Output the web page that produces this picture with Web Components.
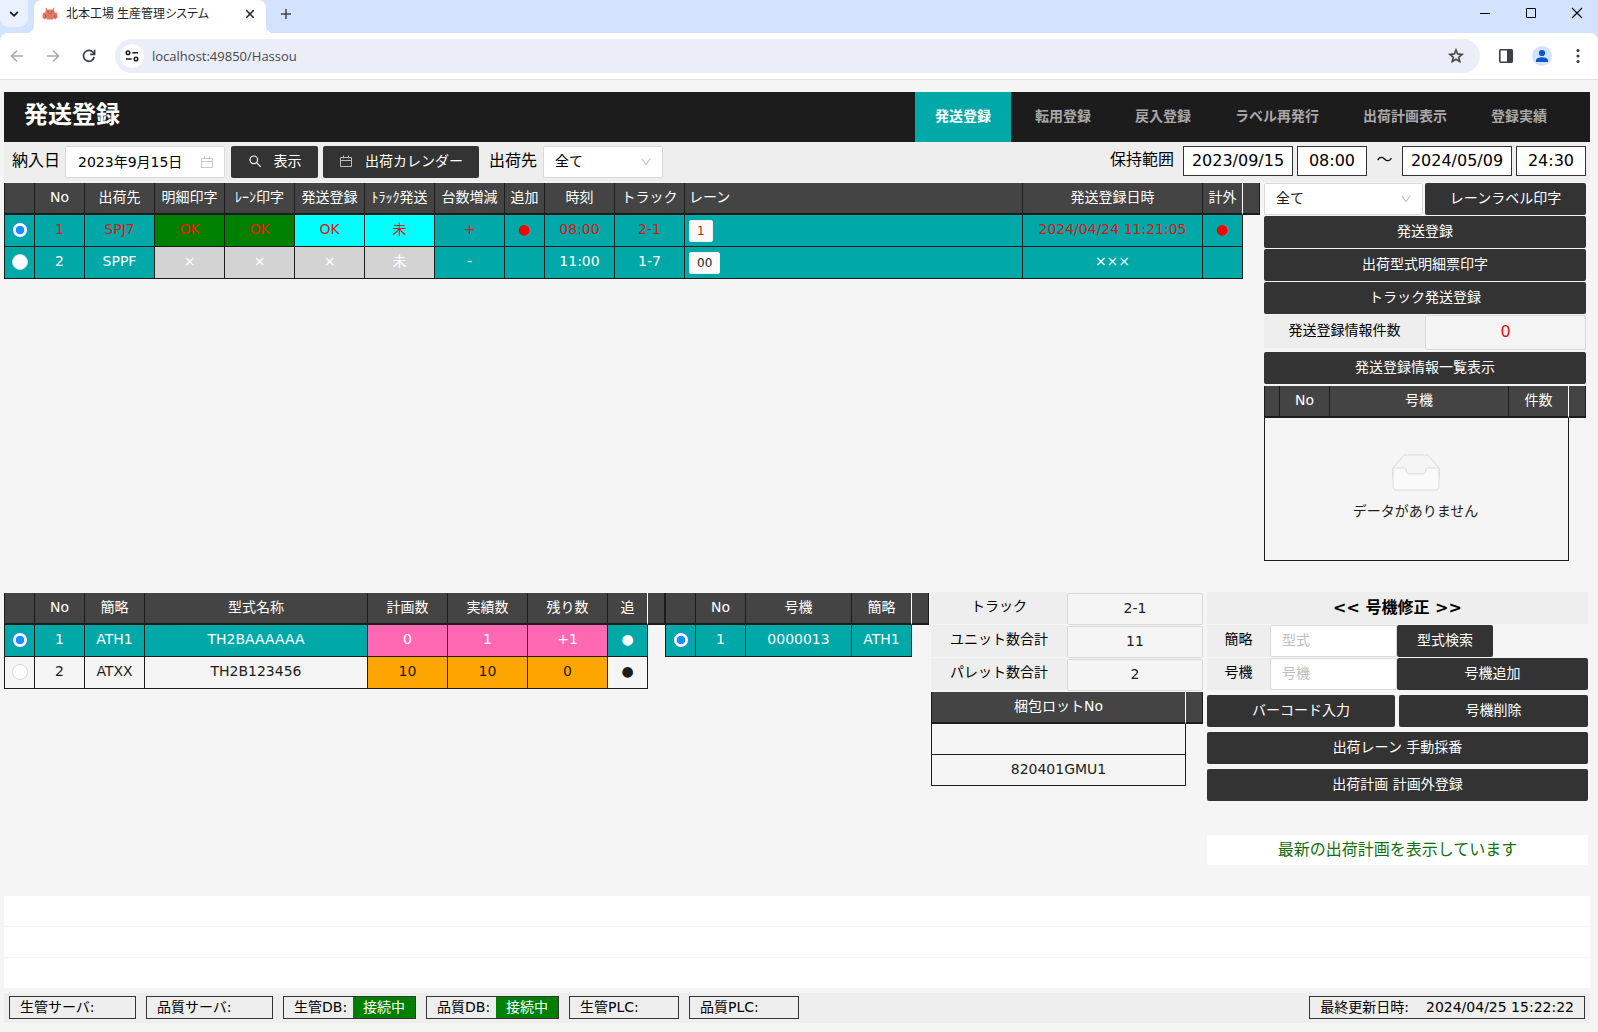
<!DOCTYPE html>
<html lang="ja">
<head>
<meta charset="utf-8">
<title>北本工場 生産管理システム</title>
<style>
  html, body { margin: 0; background: #f5f5f5; }
  body {
    font-family: "DejaVu Sans", "Noto Sans CJK JP", sans-serif;
    font-size: 14px; line-height: 20px; color: #1c1c1c;
    --dark: #333; --line: #1c1c1c; --teal: #00a8a8; --bar: #eee; --edge: #d9d9d9;
  }
</style>
</head>
<body>
<browser-frame></browser-frame>
<shipping-page></shipping-page>

<script>
const define = (name, html, setup) => {
  const template = document.createElement('template');
  template.innerHTML = '<style>*{box-sizing:border-box}:host{display:block}button,input,select{font:inherit;color:inherit;margin:0}</style>' + html;
  customElements.define(name, class extends HTMLElement {
    connectedCallback() {
      if (this.shadowRoot) return;
      const root = this.attachShadow({ mode: 'open' });
      root.append(template.content.cloneNode(true));
      if (setup) setup(this, root);
    }
  });
};

/* dark action button */
define('ui-button', `
<style>
  :host { display: flex; }
  button { flex: 1; height: 32px; border: 0; border-radius: 2px; background: var(--dark); color: #fff;
    display: flex; align-items: center; justify-content: center; gap: 12px; padding: 0 16px 2px; white-space: nowrap; line-height: 20px; }
  ::slotted(svg) { width: 14px; height: 14px; }
</style>
<button type="button"><slot name="icon"></slot><slot></slot></button>`);

/* drop-down */
define('ui-select', `
<style>
  :host { display: grid; }
  select, svg { grid-area: 1 / 1; }
  select { appearance: none; width: 100%; height: 32px; border: 1px solid var(--edge); border-radius: 2px; background: #fff; padding: 0 28px 2px 11px; }
  svg { justify-self: end; align-self: center; margin-right: 11px; width: 12px; height: 12px; pointer-events: none; }
</style>
<select><option></option></select>
<svg viewBox="0 0 12 12" fill="none" stroke="#bfbfbf" stroke-width="1.1"><path d="M1.8 2.8 6 8.6l4.2-5.8"/></svg>`,
(host, root) => {
  root.querySelector('option').textContent = host.getAttribute('value');
  root.querySelector('select').setAttribute('aria-label', host.getAttribute('label'));
});

/* caption with a read-only value */
define('info-field', `
<style>
  :host { display: grid; grid-template-columns: 1fr 1fr; }
  label { background: var(--bar); display: flex; align-items: center; justify-content: center; padding-bottom: 4px; color: #000; height: 32px; }
  input { width: 100%; min-width: 0; height: 32px; margin-top: 1px; text-align: center; border: 1px solid var(--edge); border-radius: 2px; background: #f5f5f5; padding: 0 0 2px; }
  :host([alert]) input { color: #e01010; font-size: 16px; height: 35px; margin-top: 0; }
  :host([alert]) label { height: 33px; }
</style>
<label for="v"></label><input id="v" readonly>`,
(host, root) => {
  root.querySelector('label').textContent = host.getAttribute('label');
  root.querySelector('input').value = host.getAttribute('value');
});

/* data tables */
const TABLES = {
  shipments: {
    cols: [31, 50, 70, 70, 70, 70, 70, 70, 40, 70, 70, 0, 180, 40],
    head: ['', 'No', '出荷先', '明細印字', 'ﾚｰﾝ印字', '発送登録', 'ﾄﾗｯｸ発送', '台数増減', '追加', '時刻', 'トラック', '<left>レーン', '発送登録日時', '計外'],
    rows: [
      { cls: 'teal red', cells: ['<on>', '1', 'SPJ7', 'OK|green', 'OK|green', 'OK|cyan', '未|cyan', '+', '●|dot', '08:00', '2-1', '<tag>1', '2024/04/24 11:21:05', '●|dot'] },
      { cls: 'teal', cells: ['<off>', '2', 'SPPF', '×|gray', '×|gray', '×|gray', '未|gray', '-', '', '11:00', '1-7', '<tag>00', '×××', ''] }
    ]
  },
  counts: {
    cols: [16, 50, 0, 60],
    head: ['', 'No', '号機', '件数'], rows: []
  },
  models: {
    cols: [31, 50, 60, 0, 80, 80, 80, 40],
    head: ['', 'No', '簡略', '型式名称', '計画数', '実績数', '残り数', '追'],
    rows: [
      { cls: 'teal', cells: ['<on>', '1', 'ATH1', 'TH2BAAAAAA', '0|pink', '1|pink', '+1|pink', '●'] },
      { cls: '', cells: ['<off>', '2', 'ATXX', 'TH2B123456', '10|orange', '10|orange', '0|orange', '●'] }
    ]
  },
  units: {
    cols: [31, 50, 0, 60],
    head: ['', 'No', '号機', '簡略'],
    rows: [{ cls: 'teal', cells: ['<on>', '1', '0000013', 'ATH1'] }]
  },
  lots: {
    cols: [0],
    head: ['梱包ロットNo'],
    rows: [{ cls: 'low', cells: [''] }, { cls: 'low', cells: ['820401GMU1'] }]
  }
};
define('data-grid', `
<style>
  table { width: 100%; table-layout: fixed; border-collapse: separate; border-spacing: 0; }
  th, td { height: 32px; padding: 0 0 3px; text-align: center; font-weight: 400; white-space: nowrap;
    border-right: 1px solid var(--line); border-bottom: 1px solid var(--line); line-height: 20px; }
  th { background: #444; color: #fff; border-bottom-width: 2px; padding-bottom: 2px; }
  th:first-child, td:first-child { border-left: 1px solid var(--line); }
  th:nth-last-child(2) { border-right-color: #fff; }
  td.gutter { border: 0; }
  tr.low td { height: 31px; }
  .teal td:not(.gutter) { background: var(--teal); color: #fff; }
  .red td:not(.gutter) { color: #d81818; }
  td.left, th.left { text-align: left; padding-left: 4px; }
  .teal td.green:not(.gutter) { background: #008000; }
  .teal.red td.green:not(.gutter) { color: #f01800; }
  .teal td.cyan:not(.gutter) { background: #0ff; }
  .teal td.gray:not(.gutter) { background: #d3d3d3; }
  .teal td.pink:not(.gutter) { background: #ff69b4; }
  td.orange { background: #ffa500; }
  .teal td.dot:not(.gutter) { color: #f00; }
  .tag { display: inline-block; background: #fafafa; border: 1px solid #eee; border-radius: 2px; padding: 0 7px; font-size: 12px; line-height: 20px; color: #1c1c1c; vertical-align: middle; }
  td.left { padding-bottom: 0; }
  .red .tag { color: #e01010; }
  input { appearance: none; display: block; width: 16px; height: 16px; margin: 2px auto 0; border: 1px solid var(--edge); border-radius: 50%; background: #fff; }
  input:checked { border-color: #1890ff; background: radial-gradient(circle, #1890ff 4px, #fff 4.6px); }
  td.empty { height: 143px; border-top: 0; padding: 0 2px 3px 0; }
  .empty svg { display: block; margin: 0 auto 6px; }
</style>
<table><colgroup></colgroup><thead></thead><tbody></tbody></table>`,
(host, root) => {
  const t = TABLES[host.getAttribute('source')];
  root.querySelector('colgroup').innerHTML = t.cols.map(w => w ? `<col style="width:${w}px">` : '<col>').join('') + '<col style="width:17px">';
  root.querySelector('thead').innerHTML = '<tr>' + t.head.map(h => h.startsWith('<left>')
    ? `<th class="left">${h.slice(6)}</th>` : `<th>${h}</th>`).join('') + '<th></th></tr>';
  const cell = c => {
    if (c === '<on>' || c === '<off>') return `<td><input type="radio" name="row" aria-label="行を選択"${c === '<on>' ? ' checked' : ''}></td>`;
    if (c.startsWith('<tag>')) return `<td class="left"><span class="tag">${c.slice(5)}</span></td>`;
    const [text, cls = ''] = c.split('|');
    return `<td class="${cls}">${text}</td>`;
  };
  root.querySelector('tbody').innerHTML = t.rows.length
    ? t.rows.map(r => `<tr class="${r.cls}">${r.cells.map(cell).join('')}<td class="gutter"></td></tr>`).join('')
    : `<tr><td class="empty" colspan="${t.cols.length}">
      <svg width="64" height="41" viewBox="0 0 64 41"><g transform="translate(0 1)" fill="none"><g stroke="#d9d9d9">
      <path d="M55 12.76L44.854 1.258C44.367.474 43.656 0 42.907 0H21.093c-.749 0-1.46.474-1.947 1.257L9 12.761V22h46v-9.24z"/>
      <path d="M41.613 15.931c0-1.605.994-2.93 2.227-2.931H55v18.137C55 33.26 53.68 35 52.05 35h-40.1C10.32 35 9 33.259 9 31.137V13h11.16c1.233 0 2.227 1.323 2.227 2.928v.022c0 1.605 1.005 2.901 2.237 2.901h14.752c1.232 0 2.237-1.308 2.237-2.913v-.007z" fill="#fafafa"/></g></g></svg>データがありません</td><td class="gutter"></td></tr>`;
});

/* browser window frame */
define('browser-frame', `
<style>
  :host { background: #d3e3fd; font-family: "Open Sans", "Noto Sans CJK JP", sans-serif; }
  button { border: 0; background: none; padding: 0; display: grid; place-items: center; }
  svg { display: block; }
  .tabs { height: 33px; display: flex; align-items: flex-start; }
  .list { width: 28px; height: 27px; background: #eaf1fe; border-radius: 0 0 9px 9px; }
  .corner { width: 8px; height: 33px; flex: none; }
  .corner.l { margin-left: -2px; background: radial-gradient(circle at 0 0, transparent 8px, #fff 8.5px) bottom / 8px 8px no-repeat; }
  .corner.r { background: radial-gradient(circle at 100% 0, transparent 8px, #fff 8.5px) bottom / 8px 8px no-repeat; }
  .tab { width: 232px; height: 33px; background: #fff; border-radius: 8px 8px 0 0; display: flex; align-items: center; padding: 0 9px 6px 8px; font-size: 12px; color: #1f1f1f; }
  .tab span { flex: 1; margin-left: 8px; font-feature-settings: "palt"; line-height: 20px; }
  .new { width: 24px; height: 27px; }
  .spacer { flex: 1; }
  .wins { display: flex; gap: 4px; }
  .win { width: 42px; height: 26px; }
  .tools { height: 47px; background: #fff; border-bottom: 1px solid #dfe1e5; border-radius: 8px 8px 0 0; display: flex; align-items: center; padding: 0 8px 0 5px; }
  .nav { width: 24px; height: 24px; margin-right: 12px; }
  .omni { flex: 1; min-width: 0; height: 34px; margin-left: 2px; border-radius: 17px; background: #ebeef8; display: flex; align-items: center; padding: 0 15px 0 5px; }
  .site { width: 24px; height: 24px; border-radius: 50%; background: #fff; }
  .omni input { flex: 1; min-width: 0; border: 0; background: none; padding: 0 0 0 8px; font-size: 13px; color: #45484d; outline: 0; }
  .side { width: 24px; height: 24px; margin-left: 12px; }
  .omni + .side { margin-left: 14px; }
</style>
<div class="tabs">
  <button class="list" aria-label="タブを検索"><svg width="10" height="10" viewBox="0 0 10 10" fill="none" stroke="#1f1f1f" stroke-width="1.8"><path d="m1.2 3 3.8 3.8L8.800 3"/></svg></button>
  <i class="corner l"></i>
  <div class="tab">
    <svg width="16" height="16" viewBox="0 0 16 16"><path fill="#e07a68" d="M4 3.600 3.200 1.600l1.600.6.4 1.400h5.600l.4-1.400 1.600-.6-.8 2 .9 3.400 1.300-.9 1 1.900.5 2-.5 2-2 1.400-1.200-1.200-1.300 1.300H5.300L4 12.200l-1.200 1.200-2-1.400-.5-2 .5-2 1-1.900 1.300.9z"/><path d="M3.500 8.500v3M12.500 8.500v3" stroke="#b95548" stroke-width=".9"/><path fill="#7a3a34" d="M5.500 5.300h1v1h-1zM9.500 5.300h1v1h-1z"/><path d="M6.500 7.600h3" stroke="#a64a40" stroke-width=".8"/></svg>
    <span>北本工場 生産管理システム</span>
    <button aria-label="閉じる"><svg width="14" height="14" viewBox="0 0 14 14" stroke="#1f1f1f" stroke-width="1.500"><path d="m3.300 3.300 7.400 7.400m0-7.400-7.400 7.400"/></svg></button>
  </div>
  <i class="corner r"></i>
  <button class="new" aria-label="新しいタブ"><svg width="12" height="12" viewBox="0 0 12 12" stroke="#444746" stroke-width="1.500"><path d="M6 1v10M1 6h10"/></svg></button>
  <div class="spacer"></div>
  <div class="wins">
  <button class="win" aria-label="最小化"><svg width="12" height="12" viewBox="0 0 12 12" stroke="#000"><path d="M1 6.500h10"/></svg></button>
  <button class="win" aria-label="最大化"><svg width="12" height="12" viewBox="0 0 12 12" stroke="#000" fill="none"><path d="M1.500 1.500h9v9h-9z"/></svg></button>
  <button class="win" aria-label="ウィンドウを閉じる"><svg width="12" height="12" viewBox="0 0 12 12" stroke="#000" stroke-width="1.100"><path d="m1 1 10 10M11 1 1 11"/></svg></button>
  </div>
</div>
<div class="tools">
  <button class="nav" aria-label="戻る"><svg width="14" height="14" viewBox="0 0 14 14" fill="none" stroke="#aaabad" stroke-width="1.600"><path d="M13 7H2M7 1.500 1.500 7 7 12.500"/></svg></button>
  <button class="nav" aria-label="進む"><svg width="14" height="14" viewBox="0 0 14 14" fill="none" stroke="#aaabad" stroke-width="1.600"><path d="M1 7h11M7 1.500 12.500 7 7 12.500"/></svg></button>
  <button class="nav" aria-label="再読み込み"><svg width="14" height="14" viewBox="0 0 14 14" fill="none" stroke="#3c4043" stroke-width="1.700"><path d="M12.200 8A5.400 5.400 0 1 1 11 3.300l1.200 1.300"/><path d="M12.600.8V5.400H8.200"/></svg></button>
  <div class="omni">
    <button class="site" aria-label="サイト情報"><svg width="14" height="12" viewBox="0 0 14 12" fill="none" stroke="#1f1f1f" stroke-width="1.500"><circle cx="3" cy="2.800" r="1.800"/><path d="M7.300 2.800h5.700M1 9h5.700"/><circle cx="11" cy="9" r="1.800"/></svg></button>
    <input aria-label="アドレス" value="localhost:49850/Hassou">
    <button aria-label="ブックマーク"><svg width="18" height="18" viewBox="0 0 24 24" fill="#3c4043" stroke="#3c4043" stroke-width=".6"><path d="m22 9.240-7.190-.62L12 2 9.190 8.630 2 9.240l5.460 4.730L5.820 21 12 17.270 18.180 21l-1.630-7.030L22 9.240zM12 15.400l-3.760 2.270 1-4.280-3.320-2.880 4.380-.38L12 6.100l1.710 4.040 4.380.38-3.320 2.880 1 4.280L12 15.400z"/></svg></button>
  </div>
  <button class="side" aria-label="サイドパネル"><svg width="16" height="16" viewBox="0 0 16 16"><rect x="1.800" y="1.800" width="12.500" height="12.500" rx="1" fill="none" stroke="#3c4043" stroke-width="1.600"/><path fill="#3c4043" d="M9 2h5.500v12H9z"/></svg></button>
  <button class="side" aria-label="プロフィール"><svg width="20" height="20" viewBox="0 0 20 20"><circle cx="10" cy="10" r="10" fill="#d3e3fd"/><circle cx="10" cy="7" r="3.100" fill="#0b57d0"/><path fill="#0b57d0" d="M4 16v-1.500c0-2 3-3.200 6-3.200s6 1.200 6 3.200V16z"/></svg></button>
  <button class="side" aria-label="メニュー"><svg width="4" height="16" viewBox="0 0 4 16" fill="#3c4043"><circle cx="2" cy="2.500" r="1.600"/><circle cx="2" cy="8" r="1.600"/><circle cx="2" cy="13.500" r="1.600"/></svg></button>
</div>`);

/* title and menu */
define('page-header', `
<style>
  :host { display: flex; height: 50px; background: #1c1c1c; color: #fff; padding: 0 23px 0 20px; justify-content: space-between; }
  h1 { margin: 0; font-size: 24px; line-height: 46px; }
  nav { display: flex; gap: 4px; }
  a { color: #a8a8a8; text-decoration: none; font-weight: 700; line-height: 48px; padding: 0 20px; }
  a[aria-current] { background: var(--teal); color: #fff; }
</style>
<h1>発送登録</h1>
<nav><a href="#hassou" aria-current="page">発送登録</a><a href="#tenyou">転用登録</a><a href="#modori">戻入登録</a><a href="#label">ラベル再発行</a><a href="#keikaku">出荷計画表示</a><a href="#jisseki">登録実績</a></nav>`);

define('filter-bar', `
<style>
  :host { display: flex; background: var(--bar); height: 40px; padding: 4px 4px 0 8px; color: #000; font-size: 16px; }
  label, .cap { line-height: 30px; }
  .date { display: grid; width: 160px; height: 32px; margin: 0 6px 0 5px; font-size: 14px; }
  .date > * { grid-area: 1 / 1; }
  .date input { width: 100%; height: 32px; padding: 0 30px 3px 12px; border: 1px solid var(--edge); border-radius: 2px; background: #fff; }
  .date svg { justify-self: end; align-self: center; margin-right: 12px; }
  ui-button, ui-select { font-size: 14px; }
  ui-button { margin-right: 5px; height: 32px; }
  .find { width: 87px; }
  ui-select { width: 120px; height: 32px; margin-left: 6px; }
  .out { margin-left: 5px; }
  .range { margin-left: auto; display: flex; align-items: flex-start; gap: 4px; }
  output { border: 1px solid #333; background: #fff; height: 30px; line-height: 28px; text-align: center; width: 110px; }
  output.t { width: 70px; }
  .range .cap { margin-right: 5px; line-height: 28px; }
  .tilde { width: 27px; text-align: center; line-height: 28px; }
</style>
<label for="d">納入日</label>
<div class="date"><input id="d" value="2023年9月15日"><svg width="12" height="12" viewBox="0 0 12 12" fill="none" stroke="#c8c8c8"><path d="M.5 2.500h11v9H.5zM.5 5.500h11M3.500.5v3M8.500.5v3"/></svg></div>
<ui-button class="find"><svg slot="icon" viewBox="0 0 14 14" fill="none" stroke="#fff" stroke-width="1.200"><circle cx="5.800" cy="5.800" r="3.800"/><path d="m8.600 8.600 4.200 4.200"/></svg>表示</ui-button>
<ui-button><svg slot="icon" viewBox="0 0 14 14" fill="none" stroke="#bbb"><path d="M1.500 3.500h11v9h-11zM1.500 6.500h11M4.500 1.500v3M9.500 1.500v3"/></svg>出荷カレンダー</ui-button>
<span class="cap out">出荷先</span>
<ui-select value="全て" label="出荷先"></ui-select>
<div class="range"><span class="cap">保持範囲</span><output>2023/09/15</output><output class="t">08:00</output><span class="tilde">～</span><output>2024/05/09</output><output class="t">24:30</output></div>`);

define('print-panel', `
<style>
  :host { display: flex; flex-direction: column; gap: 1px; }
  .pair { display: grid; grid-template-columns: 159px 1fr; gap: 2px; }
  info-field + ui-button { margin-top: 1px; }
  data-grid { margin-top: 1px; }
</style>
<div class="pair"><ui-select value="全て" label="レーン"></ui-select><ui-button>レーンラベル印字</ui-button></div>
<ui-button>発送登録</ui-button>
<ui-button>出荷型式明細票印字</ui-button>
<ui-button>トラック発送登録</ui-button>
<info-field alert label="発送登録情報件数" value="0"></info-field>
<ui-button>発送登録情報一覧表示</ui-button>
<data-grid source="counts"></data-grid>`);

define('track-panel', `
<style>:host { display: flex; flex-direction: column; } data-grid { margin-top: 1px; }</style>
<info-field label="トラック" value="2-1"></info-field>
<info-field label="ユニット数合計" value="11"></info-field>
<info-field label="パレット数合計" value="2"></info-field>
<data-grid source="lots"></data-grid>`);

define('unit-panel', `
<style>
  :host { display: flex; flex-direction: column; }
  h2 { margin: 0; background: var(--bar); color: #000; font-size: 16px; line-height: 32px; height: 32px; text-align: center; }
  .row { display: grid; grid-template-columns: 63px 127px 1fr; margin-top: 1px; }
  label { background: var(--bar); color: #000; text-align: center; line-height: 28px; }
  input { width: 100%; height: 32px; border: 1px solid var(--edge); border-radius: 2px; background: #fff; padding: 0 11px 2px; }
  input::placeholder { color: #bfbfbf; }
  .short { width: 96px; }
  .pair { display: grid; grid-template-columns: 188px 1fr; gap: 4px; }
  .gap { margin-top: 5px; }
  p { margin: 34px 0 0; background: #fff; color: #107010; font-size: 16px; text-align: center; line-height: 30px; height: 30px; }
</style>
<h2>&lt;&lt; 号機修正 &gt;&gt;</h2>
<div class="row"><label for="k">簡略</label><input id="k" placeholder="型式"><ui-button class="short">型式検索</ui-button></div>
<div class="row"><label for="g">号機</label><input id="g" placeholder="号機"><ui-button>号機追加</ui-button></div>
<div class="pair gap"><ui-button>バーコード入力</ui-button><ui-button>号機削除</ui-button></div>
<ui-button class="gap">出荷レーン 手動採番</ui-button>
<ui-button class="gap">出荷計画 計画外登録</ui-button>
<p>最新の出荷計画を表示しています</p>`);

define('status-box', `
<style>
  :host { display: flex; justify-content: space-between; border: 1px solid #333; color: #000; height: 23px; line-height: 20px; padding-left: 10px; white-space: nowrap; }
  b { font-weight: 400; background: #008000; color: #fff; padding: 0 10px; height: 21px; }
</style>
<slot></slot>`,
(host, root) => {
  if (!host.hasAttribute('state')) return;
  const b = document.createElement('b');
  b.textContent = host.getAttribute('state');
  root.append(b);
});

define('status-bar', `
<style>
  :host { display: flex; gap: 10px; background: var(--bar); height: 30px; padding: 3px 5px 0; }
  .srv { width: 127px; } .db { width: 133px; } .plc { width: 110px; }
  .time { margin-left: auto; padding-right: 10px; gap: 17px; }
</style>
<status-box class="srv">生管サーバ:</status-box>
<status-box class="srv">品質サーバ:</status-box>
<status-box class="db" state="接続中">生管DB:</status-box>
<status-box class="db" state="接続中">品質DB:</status-box>
<status-box class="plc">生管PLC:</status-box>
<status-box class="plc">品質PLC:</status-box>
<status-box class="time"><span>最終更新日時:</span><span>2024/04/25 15:22:22</span></status-box>`);

define('shipping-page', `
<style>
  :host { padding: 12px 8px 9px 4px; }
  .top { display: grid; grid-template-columns: minmax(0, 1fr) 322px; gap: 4px; align-items: start; margin: 1px 4px 0 0; }
  .bottom { display: grid; grid-template-columns: minmax(0, 661fr) minmax(0, 264fr) 274px 385px; align-items: start; margin: 31px 2px 0 0; }
  .bottom data-grid { margin-top: 1px; }
  track-panel { margin-left: 2px; }
  unit-panel { margin-left: 4px; }
  .logs { margin: 31px 0 5px; display: grid; gap: 1px; }
  .logs div { height: 30px; background: #fff; }
</style>
<page-header></page-header>
<filter-bar></filter-bar>
<section class="top"><data-grid source="shipments"></data-grid><print-panel></print-panel></section>
<section class="bottom"><data-grid source="models"></data-grid><data-grid source="units"></data-grid><track-panel></track-panel><unit-panel></unit-panel></section>
<div class="logs"><div></div><div></div><div></div></div>
<status-bar></status-bar>`);
</script>
</body>
</html>
